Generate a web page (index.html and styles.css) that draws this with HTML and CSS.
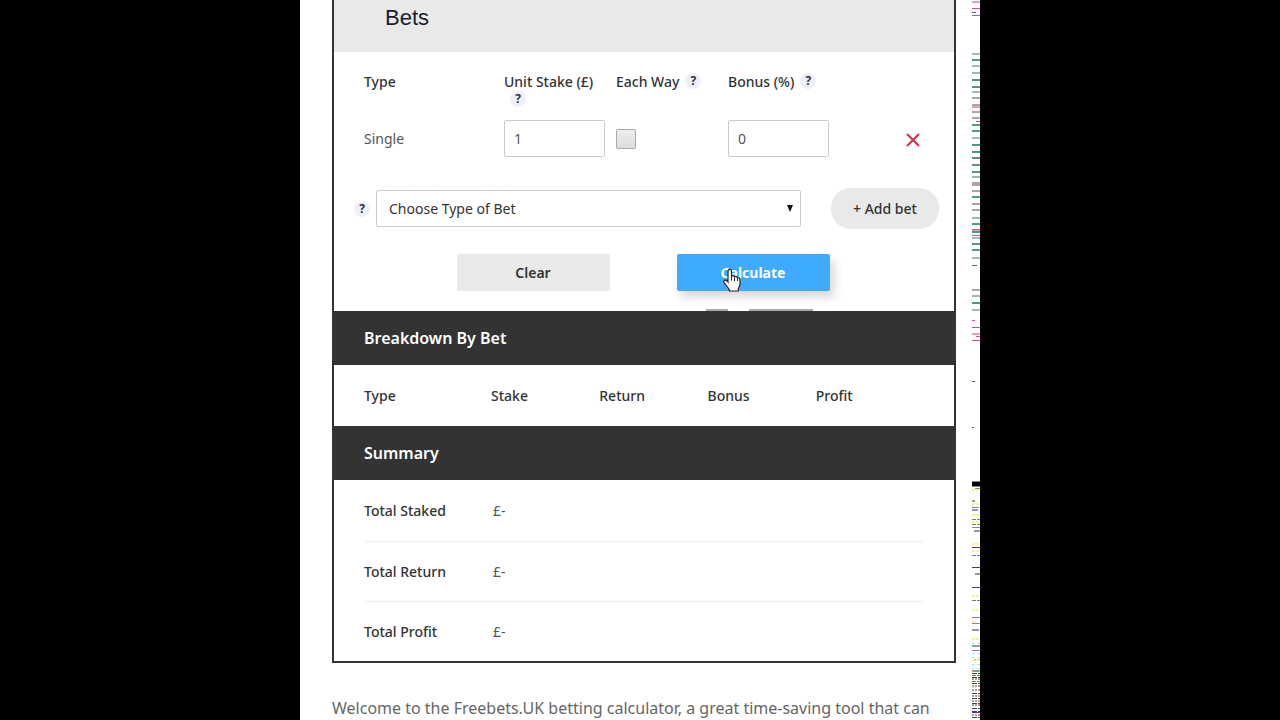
FILE: index.html
```html
<!DOCTYPE html>
<html lang="en">
<head>
    <meta charset="UTF-8">
    <title>Betting Calculator</title>
    <link rel="stylesheet" href="styles.css">
</head>
<body>
<div class="page">
    <div class="content">
        <form class="calculator">
            <h2 class="bets-title">Bets</h2>
            <table class="bets">
                <thead>
                    <tr>
                        <th>Type</th>
                        <th>Unit Stake (£)<span class="help">?</span></th>
                        <th>Each Way<span class="help">?</span></th>
                        <th>Bonus (%)<span class="help">?</span></th>
                        <th></th>
                    </tr>
                </thead>
                <tbody>
                    <tr>
                        <td>Single</td>
                        <td><input type="text" class="field" value="1" aria-label="Unit Stake"></td>
                        <td><input type="checkbox" class="check" aria-label="Each Way"></td>
                        <td><input type="text" class="field" value="0" aria-label="Bonus"></td>
                        <td class="remove-cell">
                            <button type="button" class="remove" aria-label="Remove bet">
                                <svg width="14" height="14" viewBox="0 0 14 14"><path d="M1 1L13 13M13 1L1 13" stroke="#d9304a" stroke-width="2"/></svg>
                            </button>
                        </td>
                    </tr>
                </tbody>
            </table>
            <div class="add-row">
                <span class="help">?</span>
                <div class="select-wrap">
                    <select class="bet-type" aria-label="Choose Type of Bet">
                        <option>Choose Type of Bet</option>
                    </select>
                    <svg class="arrow" width="6" height="7" viewBox="0 0 6 7"><path d="M0 0H6L3 7Z" fill="#111"/></svg>
                </div>
                <button type="button" class="add">+ Add bet</button>
            </div>
            <div class="actions">
                <button type="reset" class="btn">Clear</button>
                <button type="button" class="btn btn-primary">Calculate
                    <svg class="pointer" width="18" height="24" viewBox="0 0 18 24"><path d="M5 14V3.5C5 .5 8.500 .5 8.500 3.500V9C8.500 7 11.500 7 11.500 9.500C12 7.500 14.500 8 14.500 10.500C15 9 17 9.500 17 12V16C17 18 15 19.500 15 23H6.500C6.500 20 3 18 1 14.500C0 12 3 11 5 14Z" fill="#fff" stroke="#222" stroke-width="1.200"/><path d="M8.500 9V12.500M11.500 9.500V13M14.500 10.500V13" stroke="#222" fill="none"/></svg>
                </button>
            </div>
            <div class="tabs"><i></i><i></i></div>

            <h3 class="section">Breakdown By Bet</h3>
            <table class="breakdown">
                <tr>
                    <th>Type</th>
                    <th>Stake</th>
                    <th>Return</th>
                    <th>Bonus</th>
                    <th>Profit</th>
                </tr>
            </table>

            <h3 class="section">Summary</h3>
            <table class="summary">
                <tr><th>Total Staked</th><td>£-</td></tr>
                <tr><th>Total Return</th><td>£-</td></tr>
                <tr><th>Total Profit</th><td>£-</td></tr>
            </table>
        </form>
        <p class="intro">Welcome to the Freebets.UK betting calculator, a great time-saving tool that can</p>
    </div>
    <!-- coloured lines down the right edge -->
    <svg class="edge" width="8" height="720" viewBox="0 0 8 720">
        <path d="M0 2H8M0 107H8M0 230H8M0 334H8" stroke="#e3a0c8" stroke-width="2"/>
        <path d="M0 8.500H8M0 15.500H8M0 229.500H8M0 235.500H8M0 327.500H8M0 340.500H8M0 320.500H3M4 121.500H8M4 336.500H8" stroke="#d54aa5"/>
        <path d="M0 12.500H4M0 265.500H5M0 381.500H3M0 427.500H2" stroke="#567"/>
        <path d="M0 54H8M0 66H8M0 73H8M0 92H8M0 138H8M0 177H8M0 218H8M0 238H8M0 258H8M0 296H8M0 310H8" stroke="#9dbdab" stroke-width="2"/>
        <path d="M0 60H8M0 80H8M0 87H8M0 125H8M0 131H8M0 145H8M0 152H8M0 158H8M0 165H8M0 172H8M0 197H8M0 224H8M0 232H8M0 244H8M0 250H8M0 303H8" stroke="#4f9b74" stroke-width="2"/>
        <path d="M0 98H8M0 105H8M0 112H8M0 118H8M0 183H8M0 185H8M0 191H8M0 204H8M0 210H8M0 290H8" stroke="#aaa5a6" stroke-width="2"/>
        <path d="M0 484H8" stroke="#050510" stroke-width="5"/>
        <path d="M3 488.500H8M0 507.500H7M0 527.500H8M0 617.500H8M0 623.500H8M0 650.500H8M0 659.500H8" stroke="#9675ba"/>
        <path d="M0 490H8M0 504H8M0 515H7M0 522H8M0 544H8M0 551H8M0 596H8M0 610H6M0 622H4M0 639H8M0 660H8" stroke="#f4f3a0" stroke-width="2" stroke-dasharray="3 1"/>
        <path d="M0 501H3M0 510H6M2 531H8M3 574H8M0 630H7M0 646H8M0 671H8" stroke="#999" stroke-width="2"/>
        <path d="M0 519.500H8M0 524.500H8M0 555.500H8M0 600.500H8M0 675.500H8M0 681.500H8" stroke="#668c50" stroke-dasharray="4 1"/>
        <path d="M0 547.500H8M0 567.500H8M0 587.500H8M0 712.500H8" stroke="#632d90"/>
        <path d="M0 643.500H8M0 653.500H8M0 657.500H8M0 664.500H8M0 668.500H8" stroke="#a0eee8" stroke-dasharray="3 2"/>
        <path d="M0 673.500H8M0 677.500H8M0 683.500H8M0 693.500H8M0 698.500H8M0 703.500H8M0 708.500H8M0 711.500H8M0 717.500H8" stroke="#3c4740" stroke-dasharray="5 1"/>
        <path d="M0 679H8M0 686H8M0 690H8M0 696H8M0 701H8M0 705H8M0 715H8" stroke="#b79b93" stroke-width="2" stroke-dasharray="2 1"/>
    </svg>
</div>
</body>
</html>
```
FILE: styles.css
```css
*{
    margin: 0;
    padding: 0;
    box-sizing: border-box;
}
body{
    background: #000;
    font-family: "Noto Sans", "Open Sans", sans-serif;
    font-size: 14px;
    color: #333;
    overflow: hidden;
}
button,input,select{
    font: inherit;
    color: inherit;
}
button{
    border: none;
    cursor: pointer;
}
table{
    width: 100%;
    border-collapse: collapse;
    table-layout: fixed;
}
th{
    text-align: left;
    font-weight: 500;
}
td{
    color: #555;
}
.page{
    display: flex;
    max-width: 680px;
    min-height: 100vh;
    margin: 0 auto;
    background: #fff;
}
.content{
    flex: 1;
    padding: 0 16px 0 32px;
}
.edge{
    flex: none;
}
.calculator{
    border: 2px solid #333;
    border-top: none;
}
.bets-title{
    height: 52px;
    padding: 4px 51px;
    background: #e9e9e9;
    font: 22px/28px "Liberation Sans", Arial, sans-serif;
    color: #1c1c30;
}
/* bets form */
.bets{
    width: calc(100% - 60px);
    margin: 21px 30px 0;
}
.bets th{
    height: 47px;
    padding-right: 4px;
    line-height: 18px;
    vertical-align: top;
}
.bets th:nth-child(1){ width: 25%; }
.bets th:nth-child(2),
.bets th:nth-child(3),
.bets th:nth-child(4){ width: 20%; }
.help{
    display: inline-block;
    width: 16px;
    height: 16px;
    margin-left: 6px;
    border-radius: 50%;
    background: #efeefd;
    font-size: 12px;
    font-weight: 700;
    line-height: 16px;
    text-align: center;
    vertical-align: top;
}
.field{
    display: block;
    width: 101px;
    height: 37px;
    padding: 0 9px;
    border: 1px solid #ccc;
    border-radius: 2px;
}
.check{
    display: block;
    appearance: none;
    width: 20px;
    height: 20px;
    border: 1px solid #aaa;
    border-radius: 2px;
    background: linear-gradient(#eee, #ddd);
}
.remove-cell{
    text-align: right;
}
.remove{
    width: 22px;
    height: 22px;
    padding-top: 6px;
    background: none;
}
.remove svg{
    display: block;
    margin: 0 auto;
}
.add-row{
    display: flex;
    align-items: center;
    margin-top: 31px;
    padding: 0 15px 0 14px;
}
.select-wrap{
    position: relative;
    flex: 1;
    margin: 0 30px 0 6px;
}
.bet-type{
    display: block;
    appearance: none;
    width: 100%;
    height: 37px;
    padding: 0 12px;
    border: 1px solid #ccc;
    border-radius: 2px;
    background: #fff;
}
.arrow{
    position: absolute;
    right: 8px;
    top: 15px;
}
.add{
    width: 108px;
    height: 41px;
    border-radius: 20px;
    background: #e9e9e9;
    font-weight: 500;
}
.actions{
    display: flex;
    justify-content: center;
    gap: 67px;
    margin-top: 25px;
    padding-right: 2px;
}
.btn{
    position: relative;
    width: 153px;
    height: 37px;
    border-radius: 2px;
    background: #e9e9e9;
    font-weight: 600;
}
.btn-primary{
    background: #3eabff;
    color: #fff;
    font-weight: 700;
    box-shadow: 4px 6px 10px rgba(80, 40, 50, .2);
}
.pointer{
    position: absolute;
    left: 46px;
    top: 14px;
}
.tabs{
    display: flex;
    align-items: flex-end;
    gap: 21px;
    height: 20px;
    padding-left: 60%;
}
.tabs i{
    width: 22px;
    height: 2px;
    background: #aaa;
}
.tabs i + i{
    width: 64px;
}
/* results */
.section{
    padding: 0 30px;
    background: #333;
    color: #fff;
    font-size: 16px;
    font-weight: 600;
    line-height: 54px;
}
.breakdown,
.summary{
    width: calc(100% - 60px);
    margin: 0 30px;
}
.breakdown th{
    height: 61px;
}
.breakdown th:first-child{
    width: 127px;
}
.summary th,
.summary td{
    height: 60px;
}
.summary th{
    width: 129px;
}
.summary tr + tr{
    border-top: 1px solid #eee;
}
.summary tr:first-child th{
    height: 61px;
}
.intro{
    margin-top: 32px;
    font-size: 16px;
    line-height: 26px;
    color: #666;
    white-space: nowrap;
}
```
